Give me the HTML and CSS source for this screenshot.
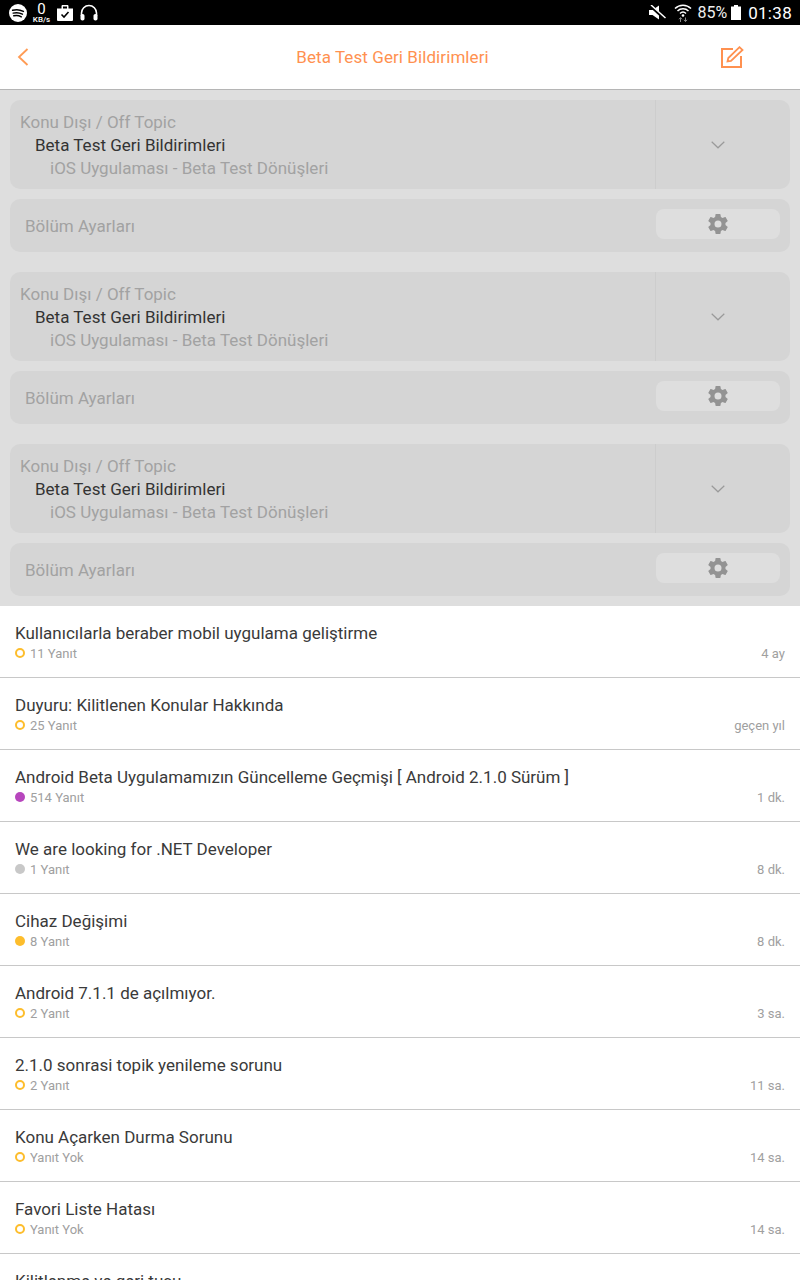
FILE: index.html
```html
<!DOCTYPE html>
<html lang="en">
<head>
  <meta charset="UTF-8">
  <meta name="viewport" content="width=device-width, initial-scale=1.0">
  <title>Beta Test Geri Bildirimleri</title>
  <link rel="stylesheet" href="styles.css">
</head>
<body>
  <div class="app">
    <div class="status-bar">
      <div class="status-left">
        <svg class="ic-spotify" width="18" height="18" viewBox="0 0 18 18">
          <circle cx="9" cy="9" r="9" fill="#fff"/>
          <path d="M3.6 6.3C7 5.3 11 5.6 14.4 7.4M4.2 9.1C7.2 8.3 10.6 8.7 13.4 10.2M4.8 11.8C7.3 11.2 10 11.5 12.3 12.8" fill="none" stroke="#000" stroke-width="1.5" stroke-linecap="round"/>
        </svg>
        <div class="net-speed"><span class="net-num">0</span><span class="net-unit">KB/s</span></div>
        <svg class="ic-bag" width="16" height="16" viewBox="0 0 16 16">
          <path d="M0 3.5h4.5V1.2C4.5.5 5 0 5.700 0h4.600c.7 0 1.200.5 1.200 1.200v2.300H16V15a1 1 0 0 1-1 1H1a1 1 0 0 1-1-1zM6 3.500h4V1.500H6z" fill="#fff" fill-rule="evenodd"/>
          <path d="M4.500 9.500l2.500 2.500 4.500-5" fill="none" stroke="#000" stroke-width="1.600"/>
        </svg>
        <svg class="ic-phones" width="18" height="17" viewBox="0 0 18 17">
          <path d="M1.500 12V9a7.500 7.500 0 0 1 15 0v3" fill="none" stroke="#fff" stroke-width="1.600"/>
          <rect x="0.500" y="10" width="4" height="6.500" rx="1.800" fill="#fff"/>
          <rect x="13.500" y="10" width="4" height="6.500" rx="1.800" fill="#fff"/>
        </svg>
      </div>
      <div class="status-right">
        <svg class="ic-mute" width="17" height="15" viewBox="0 0 17 15">
          <path d="M0 5h3.500L10 0.500V14.500L3.500 10H0z" fill="#fff"/>
          <path d="M1 0.500L16 14" stroke="#000" stroke-width="3"/>
          <path d="M2 0L16.500 13" stroke="#fff" stroke-width="1.500"/>
        </svg>
        <svg class="ic-wifi" width="18" height="19" viewBox="0 0 18 19">
          <path d="M1 5.500C5.500 1 12.500 1 17 5.500M3.500 8C6.500 5 11.500 5 14.500 8M6 10.500C7.800 8.800 10.200 8.800 12 10.500" fill="none" stroke="#fff" stroke-width="1.500"/>
          <circle cx="9" cy="12.500" r="1.300" fill="#fff"/>
          <path d="M6.500 19v-4M5 16.300l1.500-1.800 1.500 1.800M11.500 14.500v4M10 16.800l1.500 1.800 1.500-1.800" fill="none" stroke="#888" stroke-width="1"/>
        </svg>
        <span class="battery-pct">85%</span>
        <svg class="ic-battery" width="10" height="15" viewBox="0 0 10 15">
          <path d="M3 0h4v1.500h3V15H0V1.500h3z" fill="#fff"/>
        </svg>
        <span class="clock">01:38</span>
      </div>
    </div>

    <div class="nav-bar">
      <svg class="ic-back" width="12" height="18" viewBox="0 0 12 18">
        <path d="M10.500 1L2 9l8.500 8" fill="none" stroke="#ff9b54" stroke-width="1.800"/>
      </svg>
      <div class="nav-title">Beta Test Geri Bildirimleri</div>
      <svg class="ic-compose" width="24" height="22" viewBox="0 0 24 22">
        <path d="M13 3H2v18h19V10" fill="none" stroke="#ff9150" stroke-width="2"/>
        <path d="M7.500 15.500l.8-3.500L19.500 1.200 22.500 4 11 15z" fill="none" stroke="#ff9150" stroke-width="1.800"/>
      </svg>
    </div>

    <div class="filters">
      <div class="filter-group">
        <div class="picker">
          <div class="picker-options">
            <div class="opt">Konu Dışı / Off Topic</div>
            <div class="opt opt-current">Beta Test Geri Bildirimleri</div>
            <div class="opt opt-child">iOS Uygulaması - Beta Test Dönüşleri</div>
          </div>
          <div class="picker-toggle">
            <svg width="14" height="8" viewBox="0 0 14 8"><path d="M.7.700L7 6.800 13.300.700" fill="none" stroke="#9a9a9a" stroke-width="1.200"/></svg>
          </div>
        </div>
        <div class="settings-row">
          <span class="settings-label">Bölüm Ayarları</span>
          <div class="settings-btn">
            <svg width="24" height="24" viewBox="0 0 24 24"><path fill="#939393" d="M19.430 12.980c.04-.32.070-.64.070-.98s-.03-.66-.07-.98l2.110-1.650c.19-.15.240-.42.120-.64l-2-3.460c-.12-.22-.39-.3-.61-.22l-2.490 1c-.52-.4-1.080-.73-1.690-.98l-.38-2.650A.49.490 0 0 0 14 2h-4c-.25 0-.46.18-.49.42l-.38 2.650c-.61.25-1.170.59-1.690.98l-2.490-1c-.23-.09-.49 0-.61.22l-2 3.460c-.13.22-.07.49.12.64l2.110 1.650c-.04.32-.07.65-.07.98s.03.66.07.98l-2.110 1.650c-.19.15-.24.42-.12.64l2 3.460c.12.22.39.3.61.22l2.490-1c.52.4 1.080.73 1.690.98l.38 2.650c.03.24.24.42.49.42h4c.25 0 .46-.18.49-.42l.38-2.650c.61-.25 1.170-.59 1.690-.98l2.490 1c.23.09.49 0 .61-.22l2-3.460c.12-.22.07-.49-.12-.64zM12 15.500a3.500 3.500 0 1 1 0-7 3.500 3.500 0 0 1 0 7z"/></svg>
          </div>
        </div>
      </div>
      <div class="filter-group">
        <div class="picker">
          <div class="picker-options">
            <div class="opt">Konu Dışı / Off Topic</div>
            <div class="opt opt-current">Beta Test Geri Bildirimleri</div>
            <div class="opt opt-child">iOS Uygulaması - Beta Test Dönüşleri</div>
          </div>
          <div class="picker-toggle">
            <svg width="14" height="8" viewBox="0 0 14 8"><path d="M.7.700L7 6.800 13.300.700" fill="none" stroke="#9a9a9a" stroke-width="1.200"/></svg>
          </div>
        </div>
        <div class="settings-row">
          <span class="settings-label">Bölüm Ayarları</span>
          <div class="settings-btn">
            <svg width="24" height="24" viewBox="0 0 24 24"><path fill="#939393" d="M19.430 12.980c.04-.32.070-.64.070-.98s-.03-.66-.07-.98l2.110-1.650c.19-.15.240-.42.120-.64l-2-3.460c-.12-.22-.39-.3-.61-.22l-2.490 1c-.52-.4-1.080-.73-1.690-.98l-.38-2.650A.49.490 0 0 0 14 2h-4c-.25 0-.46.18-.49.42l-.38 2.650c-.61.25-1.170.59-1.690.98l-2.490-1c-.23-.09-.49 0-.61.22l-2 3.460c-.13.22-.07.49.12.64l2.110 1.650c-.04.32-.07.65-.07.98s.03.66.07.98l-2.110 1.650c-.19.15-.24.42-.12.64l2 3.460c.12.22.39.3.61.22l2.490-1c.52.4 1.080.73 1.690.98l.38 2.650c.03.24.24.42.49.42h4c.25 0 .46-.18.49-.42l.38-2.650c.61-.25 1.170-.59 1.690-.98l2.490 1c.23.09.49 0 .61-.22l2-3.460c.12-.22.07-.49-.12-.64zM12 15.500a3.500 3.500 0 1 1 0-7 3.500 3.500 0 0 1 0 7z"/></svg>
          </div>
        </div>
      </div>
      <div class="filter-group">
        <div class="picker">
          <div class="picker-options">
            <div class="opt">Konu Dışı / Off Topic</div>
            <div class="opt opt-current">Beta Test Geri Bildirimleri</div>
            <div class="opt opt-child">iOS Uygulaması - Beta Test Dönüşleri</div>
          </div>
          <div class="picker-toggle">
            <svg width="14" height="8" viewBox="0 0 14 8"><path d="M.7.700L7 6.800 13.300.700" fill="none" stroke="#9a9a9a" stroke-width="1.200"/></svg>
          </div>
        </div>
        <div class="settings-row">
          <span class="settings-label">Bölüm Ayarları</span>
          <div class="settings-btn">
            <svg width="24" height="24" viewBox="0 0 24 24"><path fill="#939393" d="M19.430 12.980c.04-.32.070-.64.070-.98s-.03-.66-.07-.98l2.110-1.650c.19-.15.240-.42.120-.64l-2-3.460c-.12-.22-.39-.3-.61-.22l-2.490 1c-.52-.4-1.080-.73-1.690-.98l-.38-2.650A.49.490 0 0 0 14 2h-4c-.25 0-.46.18-.49.42l-.38 2.650c-.61.25-1.170.59-1.690.98l-2.490-1c-.23-.09-.49 0-.61.22l-2 3.460c-.13.22-.07.49.12.64l2.110 1.650c-.04.32-.07.65-.07.98s.03.66.07.98l-2.110 1.650c-.19.15-.24.42-.12.64l2 3.460c.12.22.39.3.61.22l2.490-1c.52.4 1.080.73 1.690.98l.38 2.650c.03.24.24.42.49.42h4c.25 0 .46-.18.49-.42l.38-2.650c.61-.25 1.170-.59 1.690-.98l2.490 1c.23.09.49 0 .61-.22l2-3.460c.12-.22.07-.49-.12-.64zM12 15.500a3.500 3.500 0 1 1 0-7 3.500 3.500 0 0 1 0 7z"/></svg>
          </div>
        </div>
      </div>
    </div>

    <div class="topics">
      <div class="topic">
        <div class="topic-title">Kullanıcılarla beraber mobil uygulama geliştirme</div>
        <div class="topic-meta"><span class="dot dot-ring"></span><span class="replies">11 Yanıt</span><span class="age">4 ay</span></div>
      </div>
      <div class="topic">
        <div class="topic-title">Duyuru: Kilitlenen Konular Hakkında</div>
        <div class="topic-meta"><span class="dot dot-ring"></span><span class="replies">25 Yanıt</span><span class="age">geçen yıl</span></div>
      </div>
      <div class="topic">
        <div class="topic-title">Android Beta Uygulamamızın Güncelleme Geçmişi [ Android 2.1.0 Sürüm ]</div>
        <div class="topic-meta"><span class="dot dot-purple"></span><span class="replies">514 Yanıt</span><span class="age">1 dk.</span></div>
      </div>
      <div class="topic">
        <div class="topic-title">We are looking for .NET Developer</div>
        <div class="topic-meta"><span class="dot dot-grey"></span><span class="replies">1 Yanıt</span><span class="age">8 dk.</span></div>
      </div>
      <div class="topic">
        <div class="topic-title">Cihaz Değişimi</div>
        <div class="topic-meta"><span class="dot dot-yellow"></span><span class="replies">8 Yanıt</span><span class="age">8 dk.</span></div>
      </div>
      <div class="topic">
        <div class="topic-title">Android 7.1.1 de açılmıyor.</div>
        <div class="topic-meta"><span class="dot dot-ring"></span><span class="replies">2 Yanıt</span><span class="age">3 sa.</span></div>
      </div>
      <div class="topic">
        <div class="topic-title">2.1.0 sonrasi topik yenileme sorunu</div>
        <div class="topic-meta"><span class="dot dot-ring"></span><span class="replies">2 Yanıt</span><span class="age">11 sa.</span></div>
      </div>
      <div class="topic">
        <div class="topic-title">Konu Açarken Durma Sorunu</div>
        <div class="topic-meta"><span class="dot dot-ring"></span><span class="replies">Yanıt Yok</span><span class="age">14 sa.</span></div>
      </div>
      <div class="topic">
        <div class="topic-title">Favori Liste Hatası</div>
        <div class="topic-meta"><span class="dot dot-ring"></span><span class="replies">Yanıt Yok</span><span class="age">14 sa.</span></div>
      </div>
      <div class="topic">
        <div class="topic-title">Kilitlenme ve geri tuşu</div>
      </div>
    </div>
  </div>
</body>
</html>
```

FILE: styles.css
```css
html, body {
  margin: 0;
  padding: 0;
}
body {
  font-family: Roboto, "Liberation Sans", sans-serif;
  background-color: #fff;
}
.app {
  height: 100vh;
  overflow: hidden;
}

.status-bar {
  height: 25px;
  background-color: #000;
  color: #fff;
  display: flex;
  justify-content: space-between;
  align-items: center;
  padding: 0 8px 0 9px;
}
.status-left,
.status-right {
  display: flex;
  align-items: center;
}
.net-speed {
  width: 19px;
  margin: 0 6px 0 5px;
  display: flex;
  flex-direction: column;
  align-items: center;
}
.net-num {
  font-size: 15px;
  line-height: 14px;
}
.net-unit {
  font-size: 8px;
  line-height: 8px;
  font-weight: 500;
}
.ic-phones {
  margin-left: 7px;
}
.ic-mute {
  margin-right: 8px;
}
.ic-wifi {
  margin-right: 5px;
}
.battery-pct {
  font-size: 16px;
  margin-right: 4px;
  color: #eee;
}
.ic-battery {
  margin-right: 7px;
}
.clock {
  font-size: 17px;
  letter-spacing: 0.3px;
}

.nav-bar {
  height: 64px;
  background-color: #fff;
  border-bottom: 1px solid #b5b5b5;
  display: flex;
  align-items: center;
  padding: 0 56px 0 17px;
}
.nav-title {
  flex: 1;
  text-align: center;
  color: #ff9150;
  font-size: 17px;
  letter-spacing: 0.08px;
  padding-left: 36px;
}

.filters {
  background-color: #dedede;
  padding: 10px 10px 10px;
  height: 516px;
  box-sizing: border-box;
}
.filter-group {
  margin-bottom: 20px;
}
.filter-group:last-child {
  margin-bottom: 0;
}
.picker {
  height: 89px;
  background-color: #d5d5d5;
  border-radius: 10px;
  display: flex;
  margin-bottom: 10px;
}
.picker-options {
  flex: 1;
  padding: 11px 10px 0;
}
.opt {
  font-size: 17px;
  line-height: 23px;
  color: #a2a2a2;
}
.opt-current {
  color: #333;
  padding-left: 15px;
}
.opt-child {
  padding-left: 30px;
}
.picker-toggle {
  width: 124px;
  padding-right: 10px;
  border-left: 1px solid #cdcdcd;
  display: flex;
  align-items: center;
  justify-content: center;
}
.settings-row {
  height: 53px;
  background-color: #d5d5d5;
  border-radius: 10px;
  display: flex;
  align-items: center;
  justify-content: space-between;
  padding: 0 10px 0 15px;
}
.settings-label {
  font-size: 17px;
  color: #a2a2a2;
  margin-top: 1px;
}
.settings-btn {
  width: 124px;
  height: 30px;
  background-color: #dedede;
  border-radius: 8px;
  display: flex;
  align-items: center;
  justify-content: center;
  margin-bottom: 3px;
}

.topic {
  height: 72px;
  box-sizing: border-box;
  border-bottom: 1px solid #c8c8c8;
  padding: 16px 15px 0;
}
.topic-title {
  font-size: 17px;
  line-height: 22px;
  color: #3a3a3a;
}
.topic-meta {
  display: flex;
  align-items: center;
  font-size: 13px;
  line-height: 18px;
  margin-top: 1px;
  color: #a0a0a0;
}
.dot {
  width: 10px;
  height: 10px;
  border-radius: 50%;
  box-sizing: border-box;
  margin: -2px 5px 0 0;
}
.dot-ring {
  border: 2px solid #fdbd2c;
}
.dot-purple {
  background-color: #b746bd;
}
.dot-grey {
  background-color: #c8c8c8;
}
.dot-yellow {
  background-color: #fdbd2c;
}
.age {
  margin-left: auto;
}
```
